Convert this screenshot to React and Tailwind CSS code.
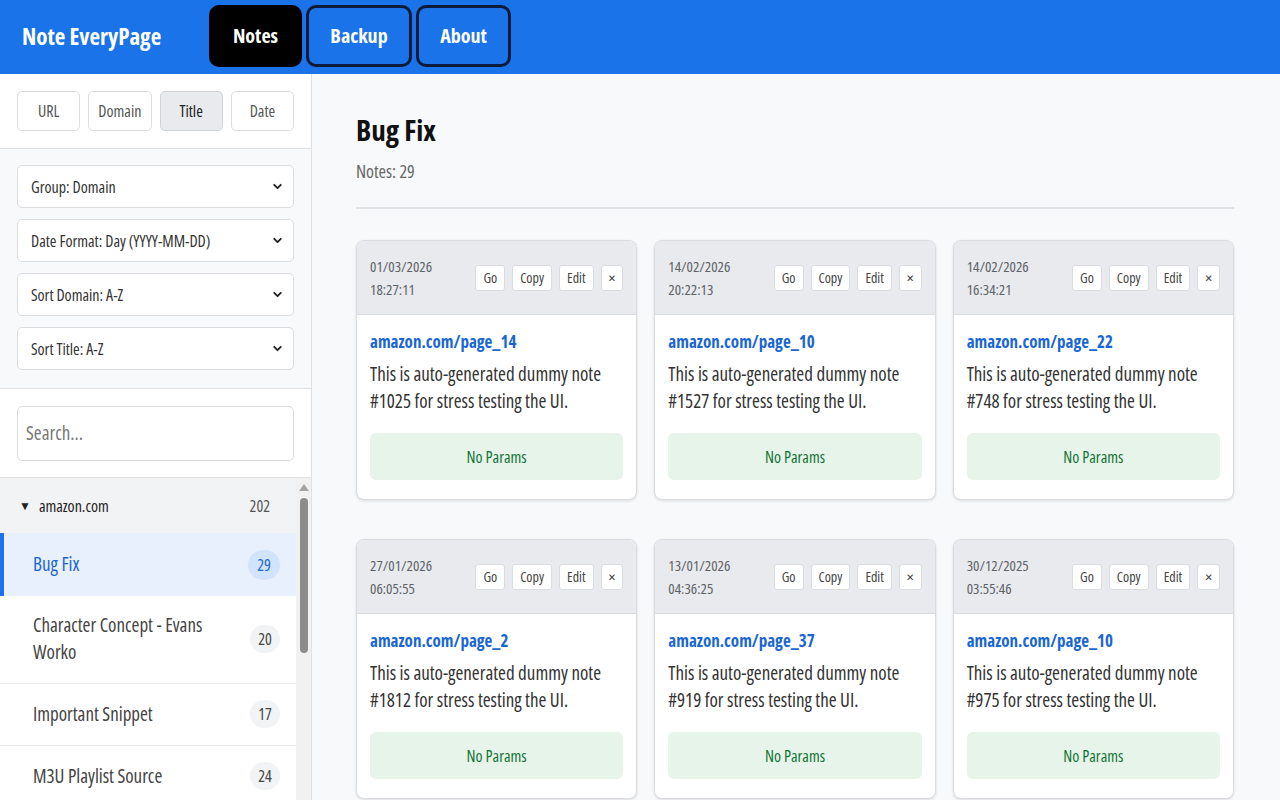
import React from "react";
import { ChevronDown } from "lucide-react";

const F = "font-['Open_Sans',sans-serif] font-stretch-condensed";

const cards = [
  { d: "01/03/2026", t: "18:27:11", url: "amazon.com/page_14", n: "#1025" },
  { d: "14/02/2026", t: "20:22:13", url: "amazon.com/page_10", n: "#1527" },
  { d: "14/02/2026", t: "16:34:21", url: "amazon.com/page_22", n: "#748" },
  { d: "27/01/2026", t: "06:05:55", url: "amazon.com/page_2", n: "#1812" },
  { d: "13/01/2026", t: "04:36:25", url: "amazon.com/page_37", n: "#919" },
  { d: "30/12/2025", t: "03:55:46", url: "amazon.com/page_10", n: "#975" },
];

function Card({ c }) {
  return (
    <div className="bg-white border border-[#dadce0] rounded-lg shadow-[0_1px_3px_rgba(0,0,0,0.12)] overflow-hidden">
      <div className="bg-[#e8eaed] h-[74px] pl-[13px] pr-[13px] flex items-center justify-between border-b border-[#dadce0]">
        <div className="text-[15px] leading-[23px] text-[#5f6368]">
          <div>{c.d}</div>
          <div>{c.t}</div>
        </div>
        <div className="flex gap-[7px]">
          {["Go", "Copy", "Edit", "×"].map((b) => (
            <button
              key={b}
              className={`h-[26px] bg-white border border-[#dadce0] rounded-[3px] leading-none text-[#444] ${
                b === "×" ? "px-[7px] text-[16px]" : "px-[7px] text-[14px]"
              }`}
            >
              {b}
            </button>
          ))}
        </div>
      </div>
      <div className="px-[13px] pt-[14px] pb-[19px]">
        <div className="text-[17px] font-bold text-[#1a66d2] leading-[26px]">{c.url}</div>
        <div className="mt-[6px] text-[19px] leading-[27px] text-[#333]">
          This is auto-generated dummy note {c.n} for stress testing the UI.
        </div>
        <div className="mt-[18px] h-[47px] rounded-md bg-[#e6f4ea] flex items-center justify-center text-[16px] text-[#137333]">
          No Params
        </div>
      </div>
    </div>
  );
}

function Sel({ label }) {
  return (
    <div className="h-[43px] bg-white border border-[#dadce0] rounded-[5px] flex items-center justify-between pl-[13px] pr-[9px] text-[16px] text-[#333]">
      <span>{label}</span>
      <ChevronDown size={13} strokeWidth={3.5} className="text-[#222]" />
    </div>
  );
}

const items = [
  { t: "Character Concept - Evans Worko", c: 20 },
  { t: "Important Snippet", c: 17 },
  { t: "M3U Playlist Source", c: 24 },
];

export default function App() {
  return (
    <div className={`${F} w-[1280px] h-[800px] overflow-hidden flex flex-col bg-[#f8f9fa]`}>
      <header className="h-[74px] shrink-0 bg-[#1a73e8] flex items-start pl-[22px]">
        <div className="h-[72px] flex items-center text-white text-[23px] font-bold whitespace-nowrap w-[187px]">Note EveryPage</div>
        <div className="flex gap-[4px] pt-[5px]">
          <button className="h-[62px] w-[93px] rounded-[10px] bg-black text-white text-[20px] font-bold">Notes</button>
          <button className="h-[62px] w-[106px] rounded-[10px] border-[3px] border-[#0b1a38] bg-[#1a73e8] text-white text-[20px] font-bold">Backup</button>
          <button className="h-[62px] w-[95px] rounded-[10px] border-[3px] border-[#0b1a38] bg-[#1a73e8] text-white text-[20px] font-bold">About</button>
        </div>
      </header>
      <div className="flex flex-1 min-h-0">
        <aside className="w-[312px] shrink-0 border-r border-[#e0e0e0] bg-white flex flex-col">
          <div className="px-[17px] pt-[17px] pb-[17px] border-b border-[#e0e0e0] grid grid-cols-4 gap-[8px]">
            {["URL", "Domain", "Title", "Date"].map((t) => (
              <button
                key={t}
                className={`h-[40px] rounded-[5px] border text-[16px] ${
                  t === "Title" ? "bg-[#e8eaed] border-[#cfd2d6] text-[#222]" : "bg-white border-[#dadce0] text-[#555]"
                }`}
              >
                {t}
              </button>
            ))}
          </div>
          <div className="bg-[#f8f9fa] px-[17px] pt-[16px] pb-[18px] border-b border-[#e0e0e0] flex flex-col gap-[11px]">
            <Sel label="Group: Domain" />
            <Sel label="Date Format: Day (YYYY-MM-DD)" />
            <Sel label="Sort Domain: A-Z" />
            <Sel label="Sort Title: A-Z" />
          </div>
          <div className="px-[17px] pt-[17px] pb-[16px] border-b border-[#e0e0e0]">
            <div className="h-[55px] border border-[#dadce0] rounded-[5px] flex items-center px-[8px] text-[19px] text-[#777]">Search...</div>
          </div>
          <div className="flex flex-1 min-h-0">
            <div className="flex-1 min-w-0">
              <div className="h-[55px] bg-[#f1f3f4] flex items-center pl-[19px] pr-[26px] text-[16px] font-medium text-[#222]">
                <span className="text-[12px] mr-[8px]">▼</span>
                <span className="flex-1">amazon.com</span>
                <span className="text-[#555] font-normal">202</span>
              </div>
              <div className="h-[63px] bg-[#e8f0fe] border-l-[4px] border-[#1a73e8] flex items-center pl-[29px] pr-[16px] text-[19px] text-[#1a66d2]">
                <span className="flex-1">Bug Fix</span>
                <span className="h-[30px] min-w-[32px] px-[6px] rounded-full bg-[#d2e3fc] flex items-center justify-center text-[16px] text-[#1a66d2]">29</span>
              </div>
              {items.map((i) => (
                <div key={i.t} className="border-b border-[#e8eaed] flex items-center pl-[33px] pr-[16px] pt-[16px] pb-[17px] text-[19px] leading-[27px] text-[#444]">
                  <span className="flex-1 pr-[20px]">{i.t}</span>
                  <span className="h-[28px] min-w-[30px] px-[6px] rounded-full bg-[#f1f3f4] flex items-center justify-center text-[16px] text-[#444]">{i.c}</span>
                </div>
              ))}
            </div>
            <div className="w-[15px] shrink-0 bg-[#f1f1f1] flex flex-col items-center pt-[6px]">
              <div className="w-0 h-0 border-l-[5px] border-r-[5px] border-b-[7px] border-l-transparent border-r-transparent border-b-[#a3a3a3]" />
              <div className="mt-[7px] w-[8px] h-[155px] rounded-full bg-[#8c8c8c]" />
            </div>
          </div>
        </aside>
        <main className="flex-1 min-w-0 pl-[44px] pr-[46px] pt-[36px]">
          <h1 className="text-[29px] font-bold text-[#111] leading-[40px]">Bug Fix</h1>
          <div className="mt-[9px] text-[18px] leading-[24px] text-[#666]">Notes: 29</div>
          <div className="mt-[24px] border-t-2 border-[#dfe1e5]" />
          <div className="mt-[31px] grid grid-cols-3 gap-x-[17px] gap-y-[39px]">
            {cards.map((c, i) => (
              <Card key={i} c={c} />
            ))}
          </div>
        </main>
      </div>
    </div>
  );
}
